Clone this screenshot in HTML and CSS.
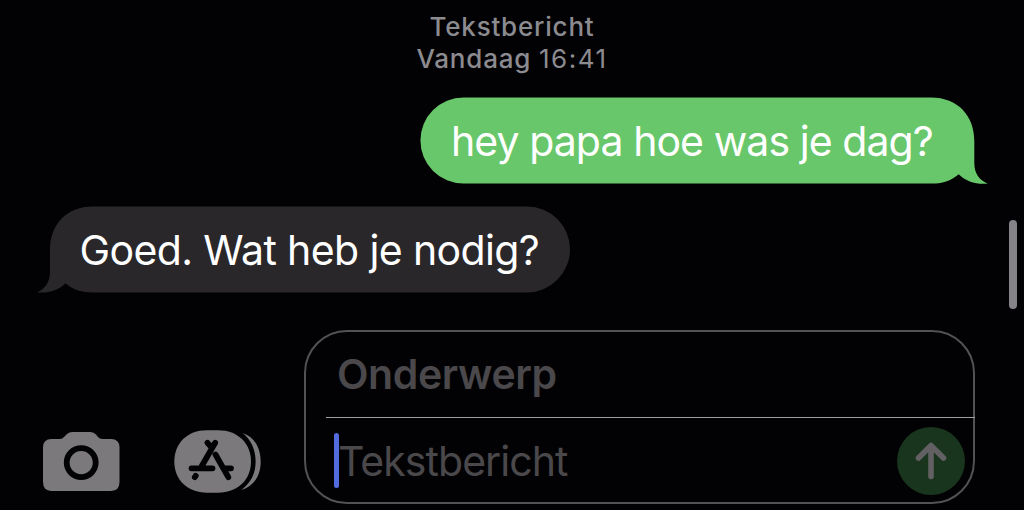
FILE: index.html
```html
<!DOCTYPE html>
<html lang="nl">
<head>
<meta charset="utf-8">
<title>Berichten</title>
<link rel="stylesheet" href="styles.css">
</head>
<body>
<main class="screen">
  <header class="stamp">
    <div class="stamp-type">Tekstbericht</div>
    <div class="stamp-time">Vandaag <span class="hour">16:41</span></div>
  </header>
  <section class="thread">
    <div class="bubble sent">
      <svg class="shape" width="568" height="87" viewBox="0 0 568 87"><path d="M43.5.4H511C538 .4 554.3 19 554.3 43.500V66C554.300 76 559 83 567.600 86.600C556 87.600 546 84.500 538.700 77.200C531 84 522 86.600 511 86.600H43.500A43.100 43.100 0 0 1 43.500.4Z"/></svg>
      <span class="text">hey papa hoe was je dag?</span>
    </div>
    <div class="bubble received">
      <svg class="shape" width="534" height="87" viewBox="0 0 534 87"><path d="M490 .4H56C29 .4 13 19 13 43.500V66C13 76 8 83 0 86.400C11.500 87.500 21 84.500 28.500 77.200C36 84 45 86.400 56 86.400H490A43 43 0 0 0 490 .4Z"/></svg>
      <span class="text">Goed. Wat heb je nodig?</span>
    </div>
  </section>
  <footer class="composer">
    <svg class="camera" width="78" height="60" viewBox="0.5 0.4 78 60"><path fill="#7b797c" d="M9 7.500H17Q20 7.500 22 5L24.500 2.500Q26.500.5 30 .5H48Q51.500.5 53.500 3L55.500 5.500Q57 7.500 60 7.500H68.500Q77 7.500 77 16V50.500Q77 59.300 68.500 59.300H9Q.5 59.300.5 50.500V16Q.5 7.500 9 7.500Z"/><circle cx="38.700" cy="31" r="14.500" fill="none" stroke="#020204" stroke-width="5.800"/></svg>
    <svg class="apps" width="88" height="64" viewBox="0 0 88 64"><path fill="#7b797c" d="M33 .3H44C64 .3 77 13.500 77 31.500S64 62.700 44 62.700H33C13 62.700.3 49.500.3 31.500S13 .3 33 .3Z"/><path fill="#7b797c" d="M68.500 3C80 6.500 86.700 17.500 86.700 31.500S80 56.500 67.500 60C77 52.500 81.600 43.500 81.600 31.500S77 9.500 68.500 3Z"/><g fill="none" stroke="#020204" stroke-width="5.800" stroke-linecap="round" stroke-linejoin="round"><path d="M33.500 12.800L37.300 17.200M41.200 12.800L27.500 36.500M41.500 24.500L54.300 47.200M17.500 38.300H38.500M49.500 38.300H57M20.800 47.200L21.700 45.900"/></g></svg>
    <div class="field">
      <div class="subject">Onderwerp</div>
      <div class="message">
        <span class="caret"></span><span class="placeholder">Tekstbericht</span>
        <div class="send"><svg width="68" height="68" viewBox="0 0 68 68" fill="none" stroke="#626063" stroke-width="5.600" stroke-linecap="round" stroke-linejoin="round"><path d="M34 49.500V19M21.500 31L34 18.500L46.500 31"/></svg></div>
      </div>
    </div>
  </footer>
  <div class="scrollbar"></div>
</main>
</body>
</html>
```
FILE: styles.css
```css
* { box-sizing: border-box; }
body { margin: 0; background: #020204; font-family: Inter, sans-serif; }
.screen { position: relative; width: 1024px; height: 510px; overflow: hidden; display: flex; flex-direction: column; }
.stamp { height: 97px; padding-top: 11px; text-align: center; color: #8c8b90; font-size: 26px; line-height: 32px; font-weight: 500; letter-spacing: 0.8px; }
.hour { font-weight: 400; letter-spacing: 1.5px; }
.thread { display: flex; flex-direction: column; gap: 22px; }
.bubble { position: relative; height: 87px; color: #fff; font-size: 41px; line-height: 89px; white-space: nowrap; }
.sent { width: 568px; margin-left: 420px; padding-left: 31px; letter-spacing: -0.93px; }
.received { width: 534px; margin-left: 37px; padding-left: 42.5px; letter-spacing: -0.62px; }
.shape { position: absolute; inset: 0; display: block; }
.sent .shape { fill: #68c76a; }
.received .shape { fill: #29272a; }
.text { position: relative; }
.composer { margin-top: 37px; padding-left: 43px; display: flex; align-items: flex-end; height: 174px; }
.camera { margin-bottom: 12px; }
.apps { margin: 0 42px 10px 53px; }
.field { width: 671px; height: 174px; border: 2px solid #525154; border-radius: 43px; display: flex; flex-direction: column; color: #4a484b; font-size: 41px; }
.subject { height: 86px; margin: 0 -2px 0 20px; padding-left: 11px; border-bottom: 1px solid #a09ea1; line-height: 84px; font-weight: 600; letter-spacing: -0.4px; }
.message { display: flex; align-items: center; height: 84px; padding-left: 28px; padding-right: 8px; }
.caret { width: 5px; height: 55px; border-radius: 3px; background: #526ce0; }
.placeholder { line-height: 84px; margin-left: -1px; padding-top: 2px; letter-spacing: -0.95px; }
.send { width: 68px; height: 68px; margin-left: auto; margin-top: 2px; border-radius: 50%; background: #19351d; }
.send svg { display: block; }
.scrollbar { position: absolute; left: 1009px; top: 220px; width: 8px; height: 89px; border-radius: 4px; background: #858387; }
```
